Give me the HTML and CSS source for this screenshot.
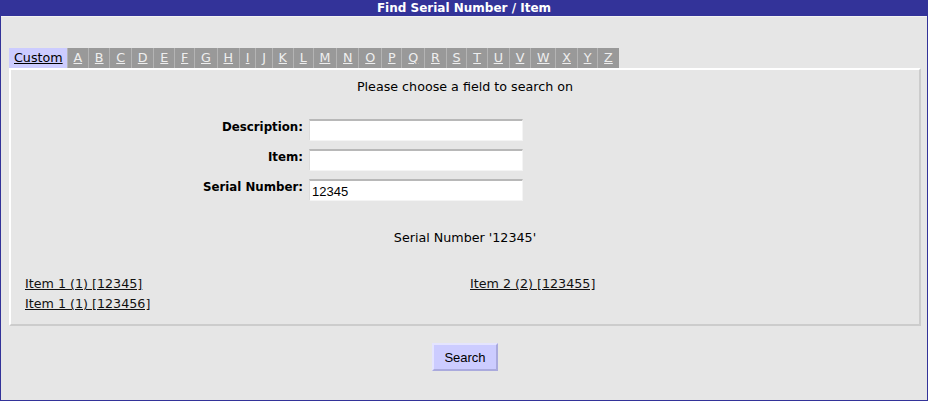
FILE: index.html
```html
<!DOCTYPE html>
<html lang="en">
<head>
  <meta charset="UTF-8" />
  <title>Find Serial Number / Item</title>
  <link rel="stylesheet" href="styles.css">
</head>
<body>
  <div class="window">
    <div class="titlebar">Find Serial Number / Item</div>

    <div class="content">
      <div class="tabs">
        <a class="tab tab-active" href="#">Custom</a>
        <a class="tab" href="#">A</a>
        <a class="tab" href="#">B</a>
        <a class="tab" href="#">C</a>
        <a class="tab" href="#">D</a>
        <a class="tab" href="#">E</a>
        <a class="tab" href="#">F</a>
        <a class="tab" href="#">G</a>
        <a class="tab" href="#">H</a>
        <a class="tab" href="#">I</a>
        <a class="tab" href="#">J</a>
        <a class="tab" href="#">K</a>
        <a class="tab" href="#">L</a>
        <a class="tab" href="#">M</a>
        <a class="tab" href="#">N</a>
        <a class="tab" href="#">O</a>
        <a class="tab" href="#">P</a>
        <a class="tab" href="#">Q</a>
        <a class="tab" href="#">R</a>
        <a class="tab" href="#">S</a>
        <a class="tab" href="#">T</a>
        <a class="tab" href="#">U</a>
        <a class="tab" href="#">V</a>
        <a class="tab" href="#">W</a>
        <a class="tab" href="#">X</a>
        <a class="tab" href="#">Y</a>
        <a class="tab" href="#">Z</a>
      </div>

      <div class="panel">
        <div class="prompt">Please choose a field to search on</div>

        <div class="fields">
          <div class="field">
            <label for="description">Description:</label>
            <input type="text" id="description" />
          </div>
          <div class="field">
            <label for="item">Item:</label>
            <input type="text" id="item" />
          </div>
          <div class="field">
            <label for="serial">Serial Number:</label>
            <input type="text" id="serial" value="12345" />
          </div>
        </div>

        <div class="summary">Serial Number '12345'</div>

        <div class="results">
          <a href="#">Item 1 (1) [12345]</a>
          <a href="#">Item 2 (2) [123455]</a>
          <a href="#">Item 1 (1) [123456]</a>
        </div>
      </div>

      <div class="actions">
        <button type="button" class="btn">Search</button>
      </div>
    </div>
  </div>
</body>
</html>
```

FILE: styles.css
```css
body {
  margin: 0;
  font-family: "DejaVu Sans", Verdana, sans-serif;
  font-size: 12.7px;
  color: #000;
}
.window {
  height: 399px;
  border: 1px solid #333399;
  background: #e6e6e6;
}
.titlebar {
  height: 15px;
  line-height: 15px;
  background: #333399;
  color: #fff;
  font-size: 12px;
  font-weight: bold;
  text-align: center;
  border-bottom: 1px solid #f2f2f2;
}
.content {
  padding: 31px 6px 0 8px;
}
.tabs {
  display: flex;
  height: 20px;
}
.tab {
  background: #999;
  color: #eee;
  border-left: 1px solid #b4b4b4;
  padding: 0 5.85px;
  line-height: 20px;
}
.tab-active {
  background: #ccccff;
  color: #000;
  border-left: none;
  padding: 0 4px 0 5px;
}
.panel {
  height: 254px;
  border-top: 2px solid #fff;
  border-left: 2px solid #fff;
  border-right: 2px solid #ccc;
  border-bottom: 2px solid #ccc;
}
.prompt {
  text-align: center;
  margin-top: 9px;
}
.fields {
  margin-top: 25px;
  display: flex;
  flex-direction: column;
  gap: 8px;
}
.field {
  display: flex;
  gap: 6px;
}
.field label {
  width: 292px;
  text-align: right;
  font-weight: bold;
  font-size: 11.8px;
  padding-top: 1px;
}
.field input {
  box-sizing: border-box;
  width: 214px;
  height: 22px;
  padding: 3px 2px 1px;
  border: 1px solid #f4f4f4;
  border-top: 2px solid #b8b8b8;
  border-left-color: #dcdcdc;
  background: #fff;
  font-family: "Liberation Sans", Arial, sans-serif;
  font-size: 13px;
  outline: none;
}
.summary {
  text-align: center;
  margin-top: 29px;
}
.results {
  margin-top: 29px;
  padding-left: 14px;
  display: grid;
  grid-template-columns: 445px 1fr;
  line-height: 20px;
}
.results a {
  color: #111;
  justify-self: start;
}
.actions {
  text-align: center;
  margin-top: 17px;
}
.btn {
  width: 66px;
  height: 28px;
  background: #ccccff;
  border: 2px solid;
  border-color: #e4e4ff #aaaadd #aaaadd #e4e4ff;
  font-family: "Liberation Sans", Arial, sans-serif;
  font-size: 13px;
  color: #000;
  padding: 0;
}
```
